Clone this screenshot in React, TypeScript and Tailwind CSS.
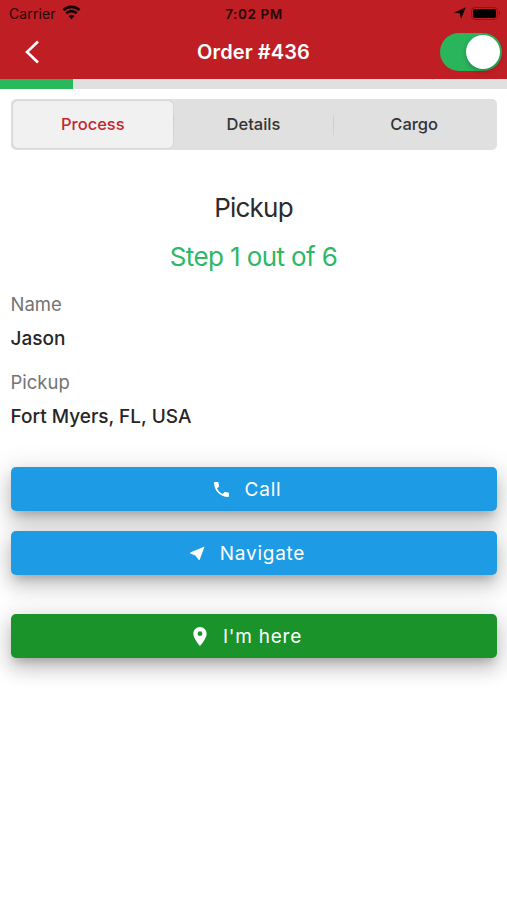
import type { ReactNode } from 'react';

interface ActionButtonProps {
  icon: ReactNode;
  label: string;
  className: string;
}

function ActionButton({ icon, label, className }: ActionButtonProps) {
  return (
    <button
      className={`flex h-11 w-full items-center justify-center rounded-[5px] pr-[12px] pt-px text-[19px] text-white shadow-[0_7px_8px_-4px_rgba(0,0,0,0.18),0_11px_18px_1px_rgba(0,0,0,0.14),0_4px_26px_4px_rgba(0,0,0,0.12)] ${className}`}
    >
      {icon}
      <span className="pt-[2px] tracking-[0.75px]">{label}</span>
    </button>
  );
}

function StatusBar() {
  return (
    <div className="grid h-7 grid-cols-3 items-center text-[#250607]">
      <div className="flex items-center gap-[6px] pl-[9px] text-[14px]">
        <span className="-mt-px tracking-[0.1px]">Carrier</span>
        <svg className="-mt-[3px]" width="19" height="15" viewBox="0 0 19 15" fill="none" stroke="#160405" strokeWidth="2.7">
          <path d="M1.5 5.1a11.5 11.5 0 0 1 16 0" />
          <path d="M4.3 8.2a7.4 7.4 0 0 1 10.4 0" />
          <path d="M9.5 14.3l-3-3.2a4.4 4.4 0 0 1 6 0z" fill="#160405" stroke="none" />
        </svg>
      </div>
      <span className="pl-px text-center text-[13.5px] font-semibold tracking-[0.6px]">7:02 PM</span>
      <div className="-mt-[2px] flex items-center justify-end gap-[5px] pr-[7px]">
        <svg width="12" height="12" viewBox="0 0 12 12" fill="#160405">
          <path d="M11.8.2 0 5.8l5.7.5 1.4 5.5z" />
        </svg>
        <div className="flex items-center gap-px">
          <div className="h-[13px] w-[27px] rounded-[4px] border border-[#8c1519] p-px">
            <div className="h-full w-full rounded-[2px] bg-black" />
          </div>
          <div className="h-1 w-px bg-[#8c1519]" />
        </div>
      </div>
    </div>
  );
}

function Header() {
  return (
    <header className="h-[79px] bg-[#bf1e24]">
      <StatusBar />
      <div className="grid h-[48px] grid-cols-3 items-center">
        <button className="pl-6" aria-label="Back">
          <svg width="16" height="24" viewBox="0 0 16 24" fill="none" stroke="white" strokeWidth="2.6">
            <path d="M14 1.5 3 12l11 10.5" />
          </svg>
        </button>
        <h1 className="whitespace-nowrap text-center text-[20px] font-semibold tracking-[0.1px] text-white">Order #436</h1>
        <div className="flex justify-end pr-[5px]">
          <div className="flex h-[38px] w-[62px] items-center justify-end rounded-full bg-[#2ab55c] pr-[2px]">
            <div className="h-[34px] w-[34px] rounded-full bg-white shadow-[0_2px_5px_rgba(0,0,0,0.25)]" />
          </div>
        </div>
      </div>
    </header>
  );
}

function Segments() {
  return (
    <div className="grid h-[51px] grid-cols-3 items-center rounded-[5px] bg-[#e0e0e0] p-[2px] text-center text-[16.5px] font-medium text-[#333]">
      <div className="flex h-full items-center justify-center rounded-[5px] bg-[#f1f1f1] text-[#c4262c] shadow-[0_0_2px_rgba(0,0,0,0.12)]">
        Process
      </div>
      <div className="border-x border-[#d0d0d0] pb-px leading-[19px]">Details</div>
      <div>Cargo</div>
    </div>
  );
}

function Field({ label, value }: { label: string; value: string }) {
  return (
    <div>
      <div className="text-[18.5px] leading-[34px] text-[#737373]">{label}</div>
      <div className="pt-[2px] text-[19px] font-medium leading-[32px] text-[#262626]">{value}</div>
    </div>
  );
}

export default function App() {
  return (
    <div className="h-[900px] w-[507px] overflow-hidden bg-white font-['Inter',sans-serif]">
      <Header />
      <div className="h-[10px] bg-[#e0e0e0]">
        <div className="h-full w-[73px] bg-[#27b95c]" />
      </div>
      <main className="px-[10.5px] pt-[10px]">
        <Segments />
        <div className="mt-[33px] text-center text-[26px] leading-[49px]">
          <h2 className="tracking-[-0.8px] text-[#2b2b2b]">Pickup</h2>
          <p className="tracking-[-0.6px] text-[#2eb765]">Step 1 out of 6</p>
        </div>
        <div className="mt-[6px] space-y-[10px]">
          <Field label="Name" value="Jason" />
          <Field label="Pickup" value="Fort Myers, FL, USA" />
        </div>
        <div className="mt-[34px] flex flex-col">
          <ActionButton
            label="Call"
            className="bg-[#1e9be5]"
            icon={
              <svg className="mr-[16px]" width="15" height="15" viewBox="3 3 18 18" fill="currentColor">
                <path d="M6.62 10.79c1.44 2.83 3.76 5.14 6.59 6.59l2.2-2.2c.27-.27.67-.36 1.02-.24 1.12.37 2.33.57 3.57.57.55 0 1 .45 1 1V20c0 .55-.45 1-1 1-9.39 0-17-7.61-17-17 0-.55.45-1 1-1h3.5c.55 0 1 .45 1 1 0 1.25.2 2.45.57 3.57.11.35.03.74-.25 1.02l-2.2 2.2z" />
              </svg>
            }
          />
          <ActionButton
            label="Navigate"
            className="mt-5 bg-[#1e9be5]"
            icon={
              <svg className="mr-[15px]" width="15" height="15" viewBox="0 0 15 15" fill="currentColor">
                <path d="M14.6.5.2 6.6v1l5.2 1.8L8.8 14h.8z" />
              </svg>
            }
          />
          <ActionButton
            label="I'm here"
            className="mt-[39px] bg-[#1a932b]"
            icon={
              <svg className="mr-[16px]" width="14" height="19" viewBox="5 2 14 20" fill="currentColor">
                <path d="M12 2C8.13 2 5 5.13 5 9c0 5.25 7 13 7 13s7-7.75 7-13c0-3.87-3.13-7-7-7zm0 9.5a2.5 2.5 0 0 1 0-5 2.5 2.5 0 0 1 0 5z" />
              </svg>
            }
          />
        </div>
      </main>
    </div>
  );
}
